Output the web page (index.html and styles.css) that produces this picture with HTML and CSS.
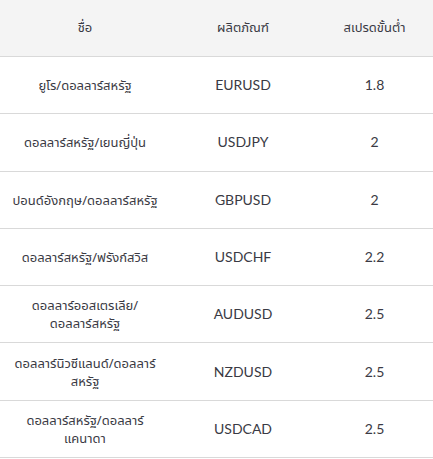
FILE: index.html
```html
<!DOCTYPE html>
<html lang="th">
<head>
<meta charset="utf-8">
<link rel="stylesheet" href="styles.css">
</head>
<body>
<table class="spreads">
  <colgroup>
    <col class="c-name">
    <col class="c-prod">
    <col class="c-spread">
  </colgroup>
  <thead>
    <tr><th>ชื่อ</th><th>ผลิตภัณฑ์</th><th>สเปรดขั้นต่ำ</th></tr>
  </thead>
  <tbody>
    <tr><td class="name">ยูโร/ดอลลาร์สหรัฐ</td><td class="code">EURUSD</td><td class="code">1.8</td></tr>
    <tr><td class="name">ดอลลาร์สหรัฐ/เยนญี่ปุ่น</td><td class="code">USDJPY</td><td class="code">2</td></tr>
    <tr><td class="name">ปอนด์อังกฤษ/ดอลลาร์สหรัฐ</td><td class="code">GBPUSD</td><td class="code">2</td></tr>
    <tr><td class="name">ดอลลาร์สหรัฐ/ฟรังก์สวิส</td><td class="code">USDCHF</td><td class="code">2.2</td></tr>
    <tr><td class="name">ดอลลาร์ออสเตรเลีย/<br>ดอลลาร์สหรัฐ</td><td class="code">AUDUSD</td><td class="code">2.5</td></tr>
    <tr><td class="name">ดอลลาร์นิวซีแลนด์/ดอลลาร์<br>สหรัฐ</td><td class="code">NZDUSD</td><td class="code">2.5</td></tr>
    <tr><td class="name">ดอลลาร์สหรัฐ/ดอลลาร์<br>แคนาดา</td><td class="code">USDCAD</td><td class="code">2.5</td></tr>
  </tbody>
</table>
</body>
</html>
```
FILE: styles.css
```css
html, body {
  margin: 0;
  padding: 0;
  background: #ffffff;
}
body {
  font-family: "Noto Sans", "Noto Sans Thai", "Open Sans", sans-serif;
  font-size: 13px;
  color: #3a3a44;
}
.spreads {
  width: 433px;
  border-collapse: collapse;
  table-layout: fixed;
}
.c-name { width: 170px; }
.c-prod { width: 146px; }
.c-spread { width: 117px; }
.spreads th {
  background: #f4f4f4;
  font-weight: normal;
  height: 56px;
  padding: 0;
  text-align: center;
  vertical-align: middle;
  border-bottom: 1px solid #d9d9d9;
}
.spreads td {
  height: 56.3px;
  padding: 0;
  text-align: center;
  vertical-align: middle;
  border-bottom: 1px solid #d9d9d9;
  line-height: 18px;
}
.spreads td.code {
  font-family: "Lato", "Noto Sans", sans-serif;
  font-size: 14px;
}
```
